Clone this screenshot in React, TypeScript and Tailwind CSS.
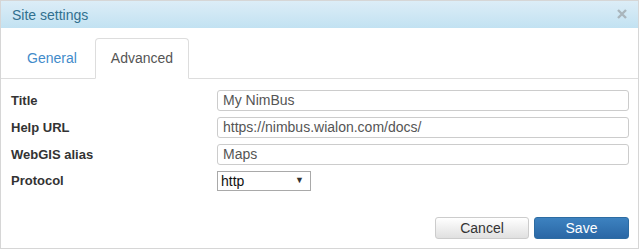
import React from "react";

const fields = [
  { label: "Title", value: "My NimBus" },
  { label: "Help URL", value: "https://nimbus.wialon.com/docs/" },
  { label: "WebGIS alias", value: "Maps" },
];

export default function App() {
  return (
    <div className="w-[640px] h-[250px] bg-white">
      <div className="w-[639px] h-[249px] border border-[#d6d6d6] flex flex-col bg-white font-['Liberation_Sans',Arial,sans-serif] text-[14px] text-[#333]">
        <div className="h-[27px] shrink-0 flex items-center justify-between pl-[11px] pr-[11px] bg-gradient-to-b from-[#dcedf7] to-[#c2e2f2] text-[#31708f]">
          <span className="leading-none">Site settings</span>
          <svg width="10" height="10" viewBox="0 0 10 10" className="mb-[1px]">
            <path d="M1 1 L9 9 M9 1 L1 9" stroke="#a9b5bc" strokeWidth="2.4" strokeLinecap="butt" />
          </svg>
        </div>
        <div className="flex pt-[10px] pl-[10px] border-b border-[#dddddd] shrink-0">
          <div className="h-[41px] px-[15px] flex items-center border border-transparent mr-[2px] text-[#428bca] -mb-px">
            General
          </div>
          <div className="h-[41px] px-[15px] flex items-center border border-[#dddddd] border-b-white bg-white rounded-t-[4px] text-[#555] -mb-px">
            Advanced
          </div>
        </div>
        <div className="flex flex-col gap-[6px] pt-[11px] pl-[10px] pr-[9px]">
          {fields.map((f) => (
            <div key={f.label} className="flex items-center h-[21px]">
              <div className="w-[206px] font-bold text-[13px] text-[#333]">{f.label}</div>
              <div className="flex-1 h-[21px] border border-[#cccccc] rounded-[3px] flex items-center pl-[5px] text-[#555]">
                {f.value}
              </div>
            </div>
          ))}
          <div className="flex items-center h-[20px]">
            <div className="w-[206px] font-bold text-[13px] text-[#333]">Protocol</div>
            <div className="w-[94px] h-[20px] border border-[#a9a9a9] flex items-center justify-between pl-[3px] pr-[6px] text-[#111]">
              <span>http</span>
              <span className="text-[9px] text-[#333]">▼</span>
            </div>
          </div>
        </div>
        <div className="mt-auto flex justify-end gap-[5px] pr-[9px] pb-[9px]">
          <div className="w-[94px] h-[22px] rounded-[3px] border border-[#cccccc] bg-gradient-to-b from-white to-[#e0e0e0] flex items-center justify-center text-[#333]">
            Cancel
          </div>
          <div className="w-[95px] h-[22px] rounded-[3px] border border-[#2d6ca2] bg-gradient-to-b from-[#3d82c0] to-[#2a67a5] flex items-center justify-center text-white">
            Save
          </div>
        </div>
      </div>
    </div>
  );
}
